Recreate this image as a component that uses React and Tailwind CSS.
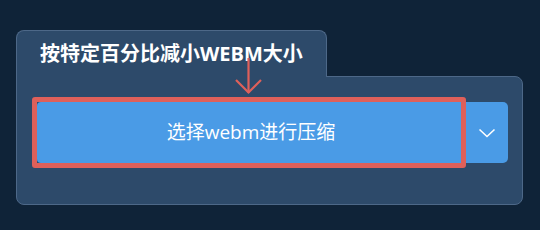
export default function App() {
	return (
		<div
			className="relative w-[540px] h-[230px] bg-[#0f2338] pt-[30px] pl-[16px]"
			style={{ fontFamily: '"Open Sans", "Noto Sans CJK SC", sans-serif' }}
		>
			{/* Tab */}
			<div className="relative z-10 -mb-px w-[311px] h-[47px] rounded-t-[8px] border-t border-x border-[#4d6888] bg-[#2d4a6a] pl-[23px] flex items-center">
				<span className="text-[20px] font-bold text-white leading-none pb-[1px]">
					按特定百分比减小WEBM大小
				</span>
			</div>

			{/* Panel */}
			<div className="w-[507px] h-[129px] border border-[#4d6888] rounded-b-[8px] rounded-tr-[8px] bg-[#2d4a6a] pt-[25px] pl-[20px]">
				<div className="flex h-[61px] w-[471px]">
					<div className="relative w-[428px] bg-[#4a9be6] rounded-l-[4px] flex items-center justify-center">
						<span className="text-[19px] text-white leading-none">选择webm进行压缩</span>
						{/* Highlight outline */}
						<div className="absolute -left-[5px] -top-[5px] -bottom-[5px] -right-[1px] border-[5px] border-[#df605a] rounded-[3px]" />
					</div>
					<div className="w-[43px] bg-[#4a9be6] rounded-r-[5px] flex items-center justify-center">
						<svg width="18" height="10" viewBox="0 0 18 10" fill="none">
							<path d="M1.5 1.5 L9 8.5 L16.5 1.5" stroke="white" strokeWidth="1.6" />
						</svg>
					</div>
				</div>
			</div>

			{/* Pointer arrow */}
			<svg
				className="absolute left-[235px] top-[58px] z-20"
				width="28"
				height="37"
				viewBox="0 0 28 37"
				fill="none"
			>
				<path d="M13.5 0 V35" stroke="#df605a" strokeWidth="2.2" />
				<path d="M1 22 L13.5 34.5 L26 22" stroke="#df605a" strokeWidth="2.2" />
			</svg>
		</div>
	);
}
